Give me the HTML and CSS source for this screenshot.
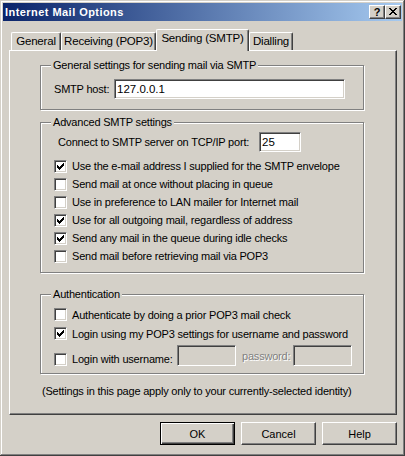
FILE: index.html
```html
<!DOCTYPE html>
<html lang="en">
  <head>
    <meta charset="UTF-8" />
    <meta name="viewport" content="width=device-width, initial-scale=1.0" />
    <title>Internet Mail Options</title>
    <link rel="stylesheet" href="styles.css">
  </head>
  <body>
    <div class="window">
      <!-- Caption -->
      <div class="titlebar">
        <span class="title">Internet Mail Options</span>
        <div class="caption-buttons">
          <span class="cap-btn help-btn">?</span>
          <span class="cap-btn close-btn">
            <svg width="8" height="7" viewBox="0 0 8 7" shape-rendering="crispEdges">
              <path d="M0 0h2v1h-2zM6 0h2v1h-2zM1 1h2v1h-2zM5 1h2v1h-2zM2 2h4v1h-4zM3 3h2v1h-2zM2 4h4v1h-4zM1 5h2v1h-2zM5 5h2v1h-2zM0 6h2v1h-2zM6 6h2v1h-2z" fill="#000"/>
            </svg>
          </span>
        </div>
      </div>

      <div class="client">
        <!-- Tabs -->
        <div class="tabs">
          <div class="tab tab-general">General</div>
          <div class="tab tab-receiving">Receiving (POP3)</div>
          <div class="tab tab-sending active">Sending (SMTP)</div>
          <div class="tab tab-dialling">Dialling</div>
        </div>

        <div class="panel">
          <div class="group group-general">
            <div class="legend">General settings for sending mail via SMTP</div>
            <div class="field-row">
              <span class="field-label host-label">SMTP host:</span>
              <div class="textbox host-box">127.0.0.1</div>
            </div>
          </div>

          <div class="group group-advanced">
            <div class="legend">Advanced SMTP settings</div>
            <div class="field-row port-row">
              <span class="field-label port-label">Connect to SMTP server on TCP/IP port:</span>
              <div class="textbox port-box">25</div>
            </div>
            <div class="check-row"><span class="checkbox checked"></span>Use the e-mail address I supplied for the SMTP envelope</div>
            <div class="check-row"><span class="checkbox"></span>Send mail at once without placing in queue</div>
            <div class="check-row"><span class="checkbox"></span>Use in preference to LAN mailer for Internet mail</div>
            <div class="check-row"><span class="checkbox checked"></span>Use for all outgoing mail, regardless of address</div>
            <div class="check-row"><span class="checkbox checked"></span>Send any mail in the queue during idle checks</div>
            <div class="check-row"><span class="checkbox"></span>Send mail before retrieving mail via POP3</div>
          </div>

          <div class="group group-auth">
            <div class="legend">Authentication</div>
            <div class="check-row"><span class="checkbox"></span>Authenticate by doing a prior POP3 mail check</div>
            <div class="check-row"><span class="checkbox checked"></span>Login using my POP3 settings for username and password</div>
            <div class="check-row login-row">
              <span class="checkbox"></span>
              <span class="user-label">Login with username:</span>
              <div class="textbox disabled small-box"></div>
              <span class="pass-label">password:</span>
              <div class="textbox disabled small-box"></div>
            </div>
          </div>

          <p class="note">(Settings in this page apply only to your currently-selected identity)</p>
        </div>

        <!-- Dialog buttons -->
        <div class="buttons">
          <button class="btn default">OK</button>
          <button class="btn">Cancel</button>
          <button class="btn">Help</button>
        </div>
      </div>
    </div>
  </body>
</html>
```

FILE: styles.css
```css
body {
  margin: 0;
  background: #d4d0c8;
  font-family: "Liberation Sans", Arial, sans-serif;
  font-size: 11px;
  letter-spacing: -0.2px;
  color: #000;
  white-space: nowrap;
}

.window {
  width: 405px;
  height: 456px;
  box-sizing: border-box;
  padding: 3px;
  background: #d4d0c8;
  box-shadow: inset -1px -1px #404040, inset 1px 1px #d4d0c8,
    inset -2px -2px #808080, inset 2px 2px #fff;
  display: flex;
  flex-direction: column;
}

/* caption */
.titlebar {
  height: 18px;
  flex-shrink: 0;
  display: flex;
  align-items: center;
  justify-content: space-between;
  background: linear-gradient(to right, #0a246a, #a6caf0);
}
.title {
  color: #fff;
  font-weight: bold;
  letter-spacing: 0.45px;
  padding-left: 2px;
  line-height: 18px;
}
.caption-buttons {
  display: flex;
  margin-right: 1px;
}
.cap-btn {
  width: 16px;
  height: 14px;
  box-sizing: border-box;
  background: #d4d0c8;
  border: 1px solid;
  border-color: #fff #404040 #404040 #fff;
  box-shadow: inset -1px -1px #808080;
  display: flex;
  align-items: center;
  justify-content: center;
}
.help-btn {
  font-weight: bold;
  font-size: 11px;
  letter-spacing: 0;
  line-height: 12px;
  padding-bottom: 1px;
}
.close-btn svg {
  display: block;
  margin-bottom: 1px;
}

/* tabs + panel */
.client {
  padding: 0 5px 0 6px;
}
.tabs {
  display: flex;
  align-items: flex-end;
  height: 21px;
  margin-top: 8px;
  padding-left: 2px;
}
.tab {
  height: 18px;
  box-sizing: border-box;
  border: 1px solid;
  border-color: #fff #404040 transparent #fff;
  border-bottom: none;
  border-radius: 2px 2px 0 0;
  box-shadow: inset -1px 0 #808080;
  text-align: center;
  line-height: 17px;
  font-size: 11.5px;
}
.tab-general { width: 50px; }
.tab-receiving { width: 95px; }
.tab-sending { width: 93px; }
.tab-dialling { width: 44px; }
.tab.active {
  height: 22px;
  margin-bottom: -1px;
  position: relative;
  background: #d4d0c8;
  padding-bottom: 3px;
}

.panel {
  height: 365px;
  box-sizing: border-box;
  border: 1px solid;
  border-color: #fff #404040 #404040 #fff;
  box-shadow: inset -1px -1px #808080;
  padding: 14px 32px 0 30px;
}

/* group boxes */
.group {
  border: 1px solid #808080;
  box-shadow: inset 1px 1px #fff, 1px 1px #fff;
  padding-left: 13px;
}
.legend {
  display: table;
  margin: -7px 0 0 -3px;
  padding: 0 2px;
  background: #d4d0c8;
  line-height: 13px;
}
.group-general { padding-bottom: 10px; }
.group-advanced { margin-top: 12px; padding-bottom: 7px; }
.group-auth { margin-top: 21px; padding-bottom: 7px; }

.field-row {
  display: flex;
  align-items: center;
  margin-top: 7px;
}
.port-row {
  margin-top: 3px;
  margin-bottom: 5px;
}
.field-label { flex-shrink: 0; }
.host-label { width: 60px; }
.port-label { width: 205px; padding-left: 4px; box-sizing: border-box; }

.textbox {
  height: 20px;
  box-sizing: border-box;
  background: #fff;
  border: 1px solid;
  border-color: #808080 #fff #fff #808080;
  box-shadow: inset 1px 1px #404040, inset -1px -1px #d4d0c8;
  padding: 2px 2px;
  line-height: 15px;
  font-size: 11.5px;
  letter-spacing: 0;
}
.host-box { width: 231px; }
.port-box { width: 42px; }
.textbox.disabled { background: #d4d0c8; }
.small-box { width: 59px; height: 21px; }

/* checkboxes */
.check-row {
  display: flex;
  align-items: center;
  height: 18px;
}
.checkbox {
  width: 13px;
  height: 13px;
  box-sizing: border-box;
  flex-shrink: 0;
  margin-right: 5px;
  background: #fff;
  border: 1px solid;
  border-color: #808080 #fff #fff #808080;
  box-shadow: inset 1px 1px #404040, inset -1px -1px #d4d0c8;
}
.checkbox.checked {
  background: #fff url("data:image/svg+xml,%3Csvg xmlns='http://www.w3.org/2000/svg' width='7' height='7' shape-rendering='crispEdges'%3E%3Cpath d='M6 0h1v1h-1zM5 1h2v1h-2zM0 2h1v1h-1zM4 2h3v1h-3zM0 3h2v1h-2zM3 3h3v1h-3zM0 4h5v1h-5zM1 5h3v1h-3zM2 6h1v1h-1z'/%3E%3C/svg%3E") no-repeat 2px 2px;
}
.group-auth .check-row { height: 19px; }
.group-auth .legend + .check-row { margin-top: 4px; }
.group-auth .login-row {
  height: 21px;
  margin-top: 2px;
}
.login-row .checkbox { align-self: flex-end; margin-bottom: 0; }
.user-label { width: 105px; align-self: flex-end; line-height: 14px; }
.pass-label {
  width: 51px;
  margin-left: 6px;
  color: #808080;
  text-shadow: 1px 1px #fff;
}

.note {
  margin: 11px 0 0 2px;
  line-height: 13px;
}

/* dialog buttons */
.buttons {
  display: flex;
  justify-content: flex-end;
  gap: 6px;
  margin-top: 7px;
}
.btn {
  width: 75px;
  height: 23px;
  padding: 0;
  font-family: inherit;
  font-size: 11px;
  letter-spacing: 0;
  color: #000;
  background: #d4d0c8;
  border: 1px solid;
  border-color: #fff #404040 #404040 #fff;
  box-shadow: inset -1px -1px #808080;
}
.btn.default {
  border-color: #000;
  box-shadow: inset 1px 1px #fff, inset -1px -1px #404040, inset -2px -2px #808080;
}
```
